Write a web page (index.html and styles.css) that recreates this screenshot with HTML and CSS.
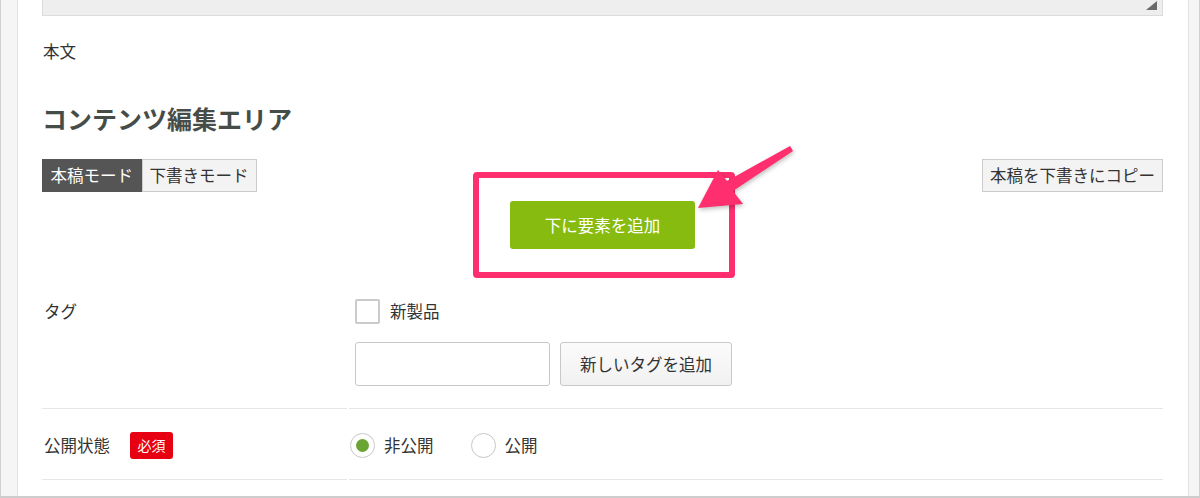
FILE: index.html
```html
<!DOCTYPE html>
<html lang="ja">
<head>
<meta charset="utf-8">
<title>コンテンツ編集エリア</title>
<link rel="stylesheet" href="styles.css">
</head>
<body>
<div class="frame">
  <div class="gutter-left"></div>
  <main class="content">
    <div class="textarea-stub"><span class="grip"></span></div>
    <div class="field-title">本文</div>
    <h2 class="section-title">コンテンツ編集エリア</h2>
    <div class="mode-bar">
      <div class="mode-switch">
        <button class="mode-btn is-active">本稿モード</button>
        <button class="mode-btn">下書きモード</button>
      </div>
      <button class="copy-btn">本稿を下書きにコピー</button>
    </div>
    <div class="add-wrap">
      <button class="add-btn">下に要素を追加</button>
    </div>
    <div class="form-grid">
      <div class="cell label-cell row-tag"><span class="label-text">タグ</span></div>
      <div class="cell control-cell row-tag">
        <label class="check-line"><span class="checkbox"></span><span>新製品</span></label>
        <div class="tag-add">
          <input class="tag-input" type="text">
          <button class="tag-btn">新しいタグを追加</button>
        </div>
      </div>
      <div class="cell label-cell row-status"><span class="label-text">公開状態</span><span class="badge">必須</span></div>
      <div class="cell control-cell row-status">
        <div class="radio-group">
          <label class="radio-opt"><span class="radio is-checked"></span><span>非公開</span></label>
          <label class="radio-opt"><span class="radio"></span><span>公開</span></label>
        </div>
      </div>
    </div>
  </main>
  <div class="gutter-right"></div>
  <div class="annot-box"></div>
  <svg class="annot-arrow" viewBox="0 0 1200 498" width="1200" height="498">
    <polygon points="698,208 718,170 727,181 790,146 793,151 733,191 743,204" fill="#ff2e6e"/>
  </svg>
</div>
</body>
</html>
```

FILE: styles.css
```css
* { box-sizing: border-box; }
html, body { margin: 0; padding: 0; background: #fff; }
body {
  font-family: "Noto Sans CJK JP", "Noto Sans", sans-serif;
  color: #333;
  font-size: 16.5px;
}
.frame {
  position: relative;
  width: 1200px;
  height: 498px;
  display: flex;
  border-left: 1px solid #cfcfcf;
  border-right: 1px solid #cfcfcf;
  border-bottom: 2px solid #cdcdcd;
  overflow: hidden;
  background: #fff;
}
.gutter-left {
  width: 17px;
  flex: none;
  background: #f5f5f5;
  border-right: 1px solid #e2e2e2;
}
.gutter-right {
  width: 11px;
  flex: none;
  background: #f5f5f5;
  border-left: 1px solid #e2e2e2;
}
.content {
  flex: 1;
  padding: 0 25px 0 24px;
  min-width: 0;
}
.textarea-stub {
  height: 16px;
  background: #eeeeee;
  border: 1px solid #dcdcdc;
  border-top: none;
  display: flex;
  justify-content: flex-end;
  align-items: flex-start;
  padding: 1px 5px 0 0;
}
.grip {
  width: 11px;
  height: 9px;
  background: #6a6a6a;
  clip-path: polygon(100% 0, 100% 100%, 0 100%);
}
.field-title {
  margin-top: 25px;
  line-height: 20px;
  padding-left: 1px;
}
.section-title {
  margin: 40px 0 0;
  font-size: 25px;
  line-height: 34px;
  font-weight: bold;
  color: #464d48;
}
.mode-bar {
  margin-top: 24px;
  display: flex;
  justify-content: space-between;
  align-items: flex-start;
}
.mode-switch { display: flex; }
button {
  font-family: inherit;
  font-size: 16.5px;
  color: #333;
  cursor: pointer;
}
.mode-btn {
  height: 33px;
  padding: 0 7px;
  margin: 0;
  background: #f3f3f3;
  border: 1px solid #cccccc;
  line-height: 31px;
}
.mode-btn.is-active {
  background: #555555;
  border-color: #555555;
  color: #fff;
  padding: 0 7.5px;
}
.copy-btn {
  height: 33px;
  padding: 0 7px;
  margin: 0;
  background: #f3f3f3;
  border: 1px solid #cccccc;
  line-height: 31px;
}
.add-wrap {
  margin-top: 9px;
  display: flex;
  justify-content: center;
}
.add-btn {
  width: 185px;
  height: 48px;
  border: none;
  border-radius: 3px;
  background: #87bb0f;
  color: #fff;
  padding: 0;
}
.form-grid {
  margin-top: 38px;
  display: grid;
  grid-template-columns: 305px 1fr;
  column-gap: 2px;
}
.cell { border-bottom: 1px solid #e6e6e6; }
.label-cell {
  padding-left: 2px;
  display: flex;
  align-items: flex-start;
}
.label-text { line-height: 25px; }
.row-tag.label-cell { padding-top: 12px; }
.row-tag.control-cell { padding: 12px 0 22px 1px; }
.row-status.label-cell { padding-top: 24px; height: 71px; }
.row-status.control-cell { padding: 24px 0 21px 1px; }
.check-line {
  display: flex;
  align-items: center;
  gap: 10px;
  margin-left: 5px;
  line-height: 25px;
}
.checkbox {
  width: 25px;
  height: 25px;
  border: 2px solid #cbcbcb;
  border-radius: 2px;
  background: #fff;
}
.tag-add {
  margin: 18px 0 0 5px;
  display: flex;
  gap: 10px;
}
.tag-input {
  width: 195px;
  height: 44px;
  border: 1px solid #c8c8c8;
  border-radius: 3px;
  margin: 0;
  background: #fff;
}
.tag-btn {
  width: 172px;
  height: 44px;
  margin: 0;
  padding: 0;
  border: 1px solid #c8c8c8;
  border-radius: 3px;
  background: linear-gradient(#fbfbfb, #f1f1f1);
}
.badge {
  margin-left: 20px;
  margin-top: -1px;
  width: 43px;
  height: 27px;
  border-radius: 3px;
  background: #e60012;
  color: #fff;
  font-size: 14px;
  line-height: 27px;
  text-align: center;
}
.radio-group {
  display: flex;
  gap: 37px;
}
.radio-opt {
  display: flex;
  align-items: center;
  gap: 9px;
  line-height: 25px;
}
.radio {
  width: 25px;
  height: 25px;
  border: 1px solid #c8c8c8;
  border-radius: 50%;
  background: #fff;
  display: flex;
  align-items: center;
  justify-content: center;
}
.radio.is-checked::after {
  content: "";
  width: 13px;
  height: 13px;
  border-radius: 50%;
  background: #6aa533;
}
.annot-box {
  position: absolute;
  left: 472px;
  top: 172px;
  width: 262px;
  height: 106px;
  border: 6px solid #ff2e6e;
  border-radius: 4px;
  pointer-events: none;
}
.annot-arrow {
  position: absolute;
  left: -1px;
  top: 0;
  pointer-events: none;
  filter: drop-shadow(1px 2px 2px rgba(0,0,0,0.25));
}
```
